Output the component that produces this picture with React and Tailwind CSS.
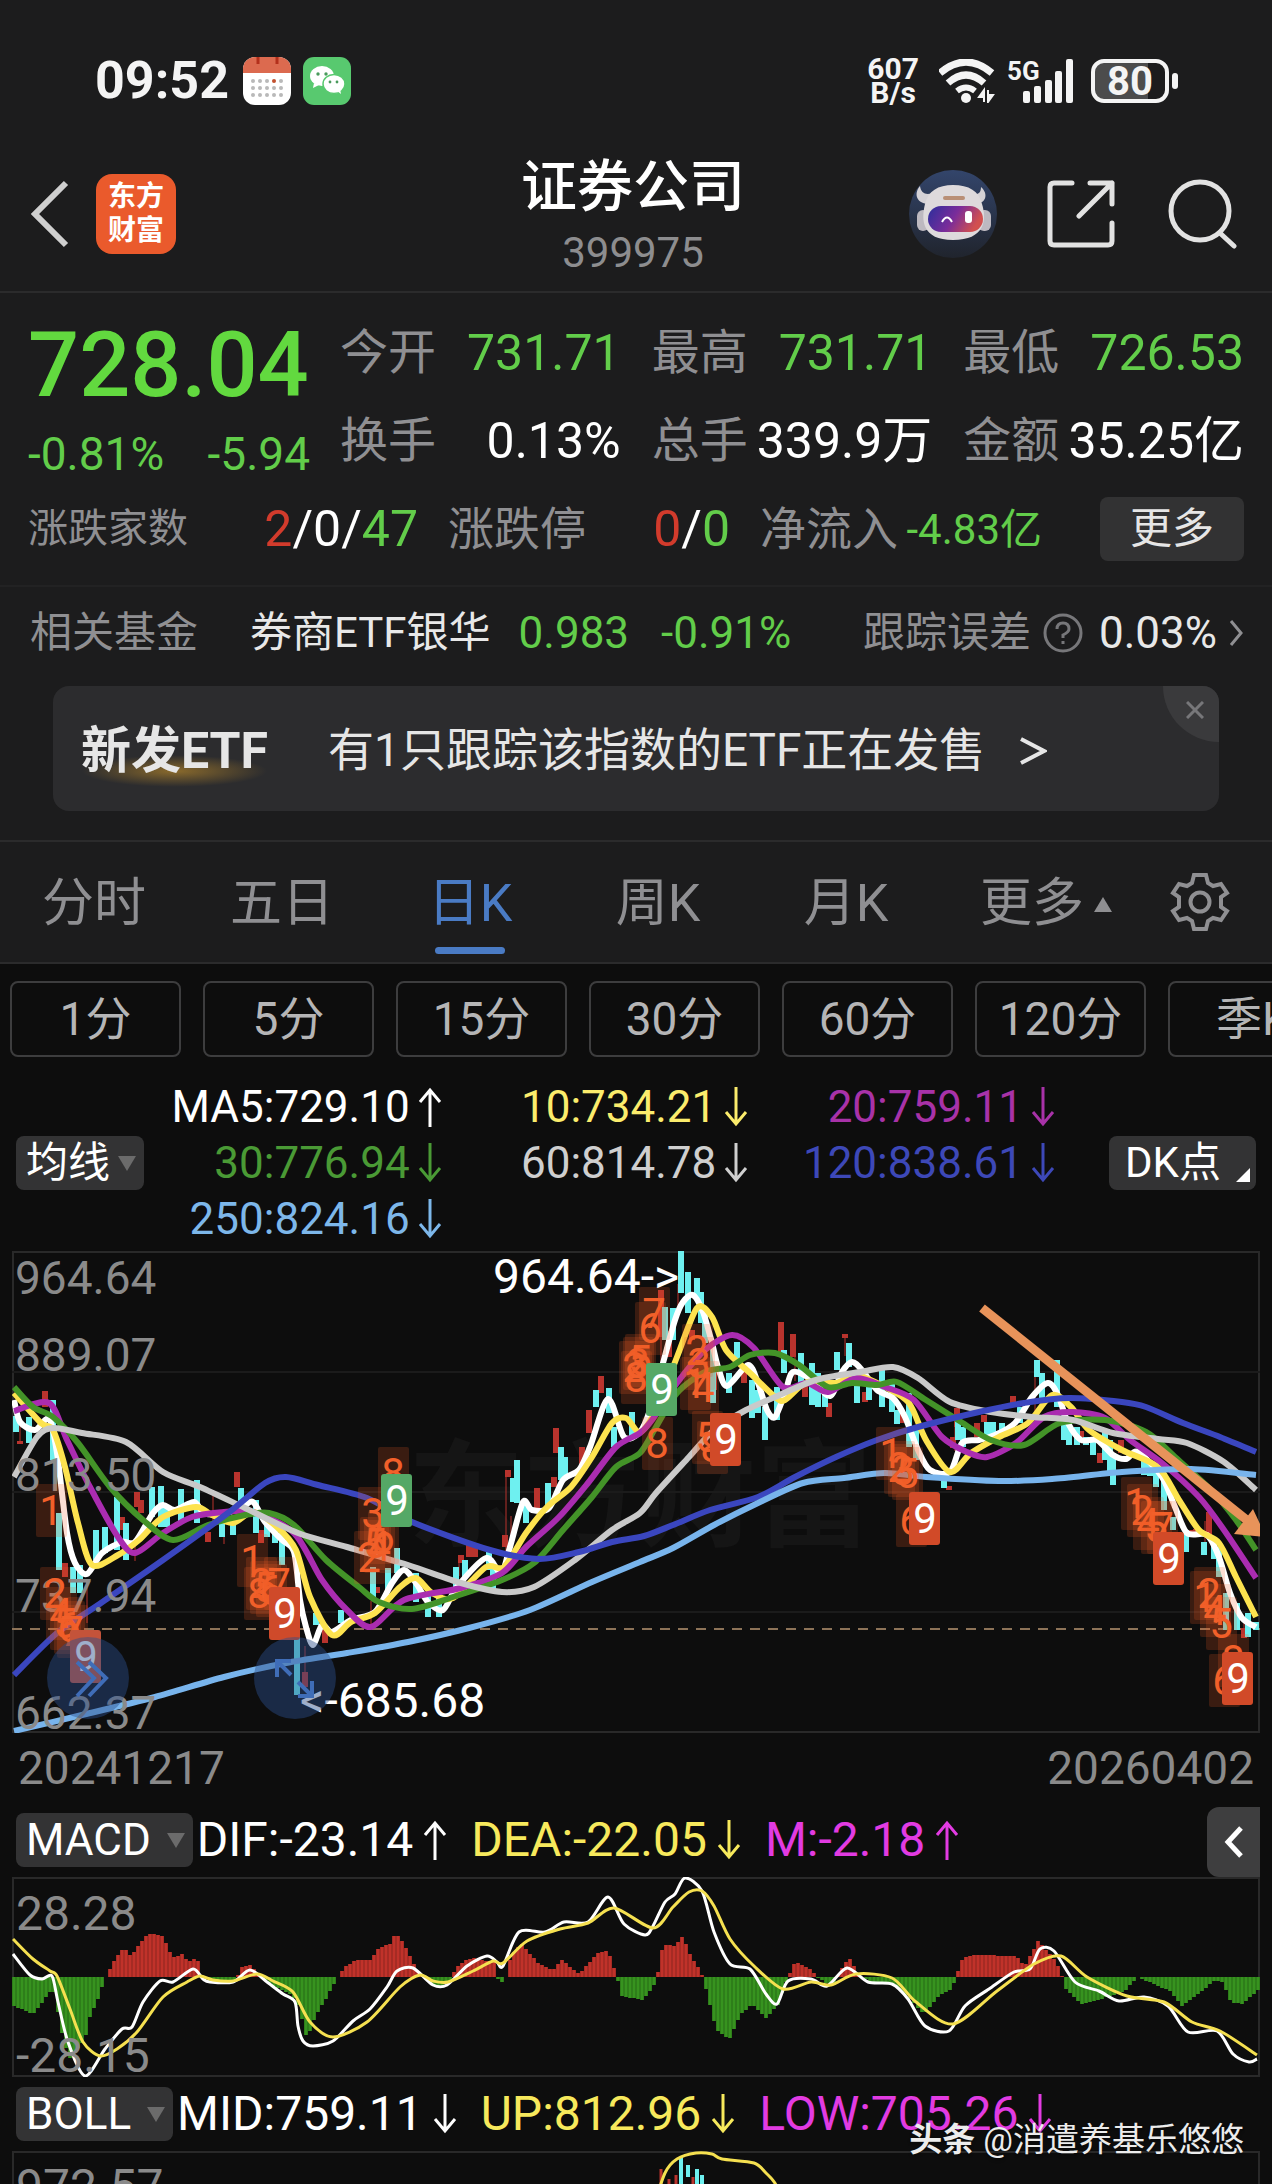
import React, { useState } from 'react';

const stats = [
    { label: '今开', value: '731.71', color: 'text-[#62cd4a]' },
    { label: '最高', value: '731.71', color: 'text-[#62cd4a]' },
    { label: '最低', value: '726.53', color: 'text-[#62cd4a]' },
    { label: '换手', value: '0.13%', color: 'text-white' },
    { label: '总手', value: '339.9万', color: 'text-white' },
    { label: '金额', value: '35.25亿', color: 'text-white' },
];

const tabs = ['分时', '五日', '日K', '周K', '月K'];
const periods = ['1分', '5分', '15分', '30分', '60分', '120分', '季K'];

const averages = [
    { text: 'MA5:729.10', up: true, color: 'text-white' },
    { text: '10:734.21', up: false, color: 'text-[#fbec6c]' },
    { text: '20:759.11', up: false, color: 'text-[#a832a8]' },
    { text: '30:776.94', up: false, color: 'text-[#4a9a35]' },
    { text: '60:814.78', up: false, color: 'text-[#cfcfcf]' },
    { text: '120:838.61', up: false, color: 'text-[#3d48b8]' },
    { text: '250:824.16', up: false, color: 'text-[#7db7ea]' },
];

// moving averages, "x,y" pairs in chart units (1248 x 482)
const maLines = [
    {
        color: '#ffffff',
        points: '2,149 8,171 23,179 37,168 45,202 55,282 63,312 75,323 90,302 110,291 123,291 141,262 151,254 163,259 182,251 192,262 210,263 229,257 241,251 253,271 270,289 282,301 288,349 294,376 301,394 310,374 320,381 339,369 363,361 380,332 392,319 404,332 416,351 431,359 445,336 474,307 489,322 498,296 511,251 520,259 537,257 551,229 567,219 578,196 596,148 612,186 628,181 638,159 651,112 663,69 671,51 681,44 691,61 700,92 706,116 715,135 736,114 746,132 755,159 763,166 773,142 781,121 800,129 818,145 830,121 840,111 850,119 865,139 881,147 893,166 906,199 918,219 938,221 950,192 967,189 983,184 1003,172 1020,146 1036,132 1046,144 1056,172 1069,189 1085,189 1101,204 1114,208 1126,201 1150,226 1163,256 1175,282 1195,284 1207,306 1218,342 1230,367 1244,376',
    },
    {
        color: '#fde34f',
        points: '2,142 29,172 41,179 53,216 66,272 80,314 106,304 127,289 151,266 184,256 200,264 221,272 241,261 265,276 284,299 298,346 320,384 339,371 363,362 388,336 404,327 420,342 441,347 474,316 492,316 514,282 535,256 559,236 580,206 600,172 614,167 628,181 644,159 665,106 685,57 700,66 714,99 738,122 763,146 773,149 795,131 824,132 844,124 873,136 897,152 914,189 938,221 959,202 987,186 1016,172 1040,144 1059,156 1077,179 1110,199 1146,216 1167,249 1187,279 1207,292 1224,326 1244,366',
    },
    {
        color: '#aa2cb0',
        points: '2,160 37,152 55,189 78,236 106,286 123,302 151,282 180,266 212,261 241,261 282,282 310,329 335,359 359,376 392,349 449,337 490,322 514,296 547,266 576,232 604,196 628,182 640,169 665,132 693,99 720,84 742,97 771,136 795,132 816,141 844,127 873,136 902,149 930,186 955,201 975,206 1004,192 1032,166 1061,161 1093,167 1118,189 1150,212 1187,246 1212,279 1244,327',
    },
    {
        color: '#439328',
        points: '2,136 21,156 41,166 66,192 98,236 131,269 161,289 196,274 233,264 257,262 282,274 314,309 347,336 367,351 400,358 441,346 490,329 522,312 551,279 580,246 604,216 628,202 644,176 665,142 693,121 718,116 738,104 763,102 787,114 816,136 840,132 865,134 885,131 914,149 946,169 979,189 1012,194 1048,172 1093,169 1134,181 1163,206 1199,239 1224,269 1244,299',
    },
    {
        color: '#c9c9c9',
        points: '2,226 25,186 41,177 70,182 114,191 151,221 188,236 233,257 286,282 335,296 396,314 449,332 490,341 522,336 563,309 600,279 628,262 644,242 677,206 702,179 734,159 763,146 804,129 848,121 881,116 906,127 938,151 979,161 1020,166 1061,169 1101,182 1146,188 1175,192 1212,211 1244,239',
    },
    {
        color: '#3a46bf',
        points: '2,424 45,382 86,354 151,309 216,262 253,232 274,226 306,234 355,247 400,271 478,299 527,308 567,301 600,291 632,285 661,274 698,259 746,246 783,226 824,206 865,189 906,176 967,161 1012,152 1057,147 1110,151 1134,156 1171,172 1208,186 1244,201',
    },
    {
        color: '#78b4ec',
        points: '2,480 70,464 143,446 212,426 274,412 335,402 396,391 457,377 518,359 580,331 628,311 661,297 702,274 746,252 791,232 832,227 873,222 914,226 987,230 1040,228 1110,221 1179,218 1244,224',
    },
];

// candle bodies, [x, top, bottom]
const fallingCandles = [
    [4, 165, 181], [17, 166, 192], [41, 149, 209], [47, 262, 319], [61, 316, 342], [68, 314, 342], [84, 279, 309], [93, 276, 302],
    [105, 246, 299], [114, 272, 309], [140, 236, 266], [149, 235, 276], [155, 256, 276], [169, 238, 272], [185, 229, 272],
    [210, 266, 286], [221, 269, 284], [229, 237, 262], [244, 249, 282], [255, 269, 286], [263, 274, 292], [270, 282, 314],
    [285, 386, 444], [304, 362, 374], [329, 359, 372], [361, 316, 349], [376, 317, 339], [385, 297, 322], [404, 322, 351],
    [416, 342, 366], [427, 346, 366], [444, 316, 339], [453, 309, 326], [477, 301, 319], [481, 316, 337], [501, 227, 251],
    [505, 209, 252], [514, 252, 272], [536, 232, 256], [549, 196, 229], [553, 206, 229], [584, 139, 156], [597, 137, 162],
    [602, 176, 196], [620, 161, 186], [653, 56, 89], [661, 57, 89], [669, 0, 42], [676, 21, 62], [685, 27, 49], [689, 41, 72],
    [693, 56, 92], [701, 89, 152], [717, 122, 142], [725, 91, 112], [740, 129, 167], [746, 139, 162], [753, 156, 189],
    [765, 136, 169], [772, 99, 122], [789, 102, 132], [800, 112, 154], [806, 122, 156], [813, 139, 156], [825, 101, 119],
    [837, 92, 116], [845, 132, 152], [857, 132, 149], [870, 119, 156], [880, 132, 161], [885, 159, 173], [897, 142, 196],
    [904, 176, 209], [932, 222, 237], [946, 169, 189], [951, 176, 196], [975, 171, 189], [981, 171, 186], [990, 172, 182],
    [1008, 156, 172], [1025, 109, 126], [1030, 122, 152], [1045, 109, 156], [1052, 162, 189], [1057, 172, 194],
    [1065, 176, 194], [1074, 186, 194], [1081, 189, 204], [1093, 181, 209], [1098, 189, 224], [1101, 202, 234],
    [1132, 209, 224], [1138, 212, 225], [1144, 212, 236], [1152, 222, 259], [1161, 266, 279], [1174, 279, 301],
    [1192, 291, 304], [1202, 292, 308], [1207, 296, 326], [1214, 342, 379], [1225, 352, 379], [1236, 362, 386], [1244, 371, 379],
];

const risingCandles = [
    [8, 190, 193], [33, 140, 156], [53, 312, 326], [110, 266, 279], [125, 241, 256], [129, 249, 262], [196, 281, 291],
    [225, 221, 236], [249, 279, 292], [293, 421, 436], [313, 379, 392], [365, 336, 342], [449, 304, 312], [457, 292, 306],
    [463, 296, 306], [493, 284, 296], [496, 219, 226], [525, 237, 259], [542, 226, 236], [544, 177, 202], [570, 196, 216],
    [577, 159, 182], [589, 125, 142], [649, 39, 86], [657, 80, 106], [680, 79, 89], [702, 112, 139], [732, 116, 132],
    [769, 71, 102], [781, 83, 106], [793, 132, 146], [797, 120, 132], [817, 152, 166], [833, 83, 87], [853, 141, 151],
    [889, 162, 172], [937, 235, 239], [941, 186, 197], [945, 157, 176], [965, 172, 186], [972, 164, 171], [1001, 145, 156],
    [1069, 180, 189], [1088, 202, 212], [1109, 189, 202], [1179, 279, 286], [1184, 278, 285], [1197, 261, 286], [1232, 377, 387],
];

const wicks = [
    [8, 168, 192], [75, 330, 372], [201, 245, 270], [212, 275, 293], [123, 290, 310], [293, 395, 440], [359, 350, 375],
    [447, 305, 325], [494, 226, 300], [499, 265, 300], [649, 86, 112], [666, 33, 60], [783, 106, 130], [833, 87, 105],
    [943, 160, 200], [1023, 126, 160], [1193, 270, 300], [1232, 365, 380],
];

// TD sequence counts, [x, y, digit]
const counts = [
    [39, 259, 1], [43, 342, 2], [49, 362, 4], [53, 372, 5], [57, 376, 6], [60, 380, 7],
    [240, 309, 1], [249, 332, 2], [253, 336, 5], [247, 342, 8], [259, 339, 6], [267, 332, 7],
    [361, 262, 3], [371, 286, 6], [363, 292, 5], [357, 306, 2], [367, 295, 4], [381, 222, 8],
    [626, 112, 3], [628, 109, 5], [622, 116, 2], [624, 126, 8], [642, 62, 7], [638, 77, 6], [645, 192, 8],
    [685, 99, 2], [687, 112, 3], [683, 132, 1], [691, 136, 4], [695, 186, 5], [700, 196, 8],
    [879, 202, 1], [887, 216, 2], [891, 219, 3], [895, 222, 5], [899, 269, 6],
    [1124, 252, 1], [1130, 259, 2], [1136, 272, 4], [1144, 276, 5], [1150, 276, 7],
    [1193, 346, 1], [1197, 342, 2], [1203, 359, 4], [1209, 372, 5], [1221, 409, 8], [1212, 429, 6],
];

const badges = [
    [58, 379, '#c4533a'],
    [257, 336, '#cf4a2a'],
    [369, 223, '#55a866'],
    [634, 112, '#55a866'],
    [698, 162, '#d14a28'],
    [897, 241, '#d14a28'],
    [1141, 281, '#d14a28'],
    [1210, 401, '#d14a28'],
];

// MACD histogram shape, [x, value]
const histogram = [
    [0, -29], [19, -37], [37, -14], [41, -15], [46, -48], [55, -82], [71, -62], [76, -40], [83, -25], [91, -1], [93, 2], [101, 18],
    [110, 29], [117, 21], [125, 33], [131, 40], [138, 44], [150, 40], [155, 26], [161, 19], [168, 23], [175, 15], [183, 20],
    [188, 1], [198, -7], [208, -3], [218, -6], [223, -1], [226, 9], [236, 12], [245, 3], [250, -2], [265, -12], [278, -18],
    [285, -30], [293, -62], [301, -40], [313, -20], [323, -1], [331, 10], [341, 17], [356, 17], [365, 29], [376, 33], [381, 43],
    [386, 40], [393, 27], [405, 3], [421, -10], [438, -4], [441, 9], [450, 16], [458, 19], [480, 15], [482, 0], [487, -6],
    [492, 0], [497, 21], [507, 34], [523, 15], [539, 7], [548, 17], [565, 3], [584, 24], [594, 27], [602, 3], [608, -19],
    [629, -23], [641, -7], [643, 0], [649, 33], [661, 31], [669, 41], [677, 21], [687, 5], [692, -12], [702, -52], [715, -63],
    [726, -38], [738, -27], [752, -41], [764, -28], [773, -2], [781, 15], [797, 8], [803, 0], [819, -10], [825, 5], [835, 20],
    [844, 3], [856, -5], [880, -7], [896, -22], [910, -37], [925, -19], [938, -12], [942, 0], [949, 20], [961, 22], [1002, 21],
    [1011, 11], [1024, 36], [1038, 21], [1046, 8], [1052, -12], [1067, -27], [1087, -22], [1111, -14], [1123, 0], [1140, -7],
    [1156, -14], [1168, -29], [1184, -17], [1200, -4], [1209, -5], [1217, -25], [1229, -27], [1248, -9],
];

const difPoints =
    '1,77 18,98 30,102 40,99 46,125 56,165 73,199 93,172 110,152 120,150 131,125 148,104 161,105 181,92 191,102 198,105 221,105 238,93 255,105 271,117 283,125 286,149 291,164 301,169 321,164 341,144 358,132 375,110 385,94 401,91 421,108 435,108 455,89 475,79 485,85 491,89 507,55 533,55 552,45 576,45 596,20 612,47 633,58 641,49 653,25 663,17 673,1 690,14 702,55 718,87 738,92 754,117 765,127 776,104 799,102 815,109 835,91 856,105 880,107 896,122 913,149 937,154 953,129 977,112 1002,95 1018,92 1028,72 1042,74 1063,105 1087,114 1107,124 1132,120 1156,129 1176,155 1205,154 1221,177 1237,185 1245,182';
const deaPoints =
    '1,62 21,82 38,94 45,99 58,132 71,165 88,179 105,172 125,155 151,120 175,105 188,99 201,103 221,104 245,97 261,104 281,115 298,145 321,160 355,145 388,110 408,98 421,104 436,105 461,94 481,84 491,86 515,64 548,52 576,46 602,31 641,51 661,30 677,15 690,14 702,29 718,62 742,89 771,112 799,105 819,108 844,97 880,101 904,125 941,147 985,114 1022,87 1049,79 1075,100 1115,119 1152,125 1180,145 1208,154 1245,178';

// smooth path through the points
const toPath = (str) => {
    const p = str.split(' ').map((s) => s.split(',').map(Number));
    let d = `M${p[0][0]} ${p[0][1]}`;
    for (let i = 0; i < p.length - 1; i++) {
        const a = p[i - 1] || p[i];
        const b = p[i];
        const c = p[i + 1];
        const e = p[i + 2] || c;
        d += ` C${b[0] + (c[0] - a[0]) / 7} ${b[1] + (c[1] - a[1]) / 7} ${c[0] - (e[0] - b[0]) / 7} ${c[1] - (e[1] - b[1]) / 7} ${c[0]} ${c[1]}`;
    }
    return d;
};

const barPath = (positive) => {
    let d = '';
    for (let x = 0; x < 1246; x += 4) {
        const i = Math.max(1, histogram.findIndex((h) => h[0] > x));
        const [x0, v0] = histogram[i - 1];
        const [x1, v1] = histogram[i];
        const v = v0 + ((v1 - v0) * (x - x0)) / (x1 - x0);
        if (v > 0 === positive) d += `M${x + 2} 100V${Math.round(100 - v)}`;
    }
    return d;
};

const TrendArrow = ({ up }) => (
    <svg className="h-10 w-6 shrink-0" viewBox="0 0 24 40" fill="none" stroke="currentColor" strokeWidth="3">
        <path d={up ? 'M12 40V3M2 15L12 3L22 15' : 'M12 0V37M2 25L12 37L22 25'} />
    </svg>
);

const Chip = ({ children }) => (
    <button className="flex h-[54px] shrink-0 items-center rounded-lg bg-[#333334] pr-2 pl-2.5 text-[42px] leading-[54px] text-white">
        {children}
        <svg className="ml-2 h-4 w-[18px]" viewBox="0 0 18 16">
            <path d="M0 1H18L9 16Z" fill="#6b6b6b" />
        </svg>
    </button>
);

const StatusBar = () => (
    <div className="flex items-center justify-between pt-14 pr-[93px] pb-8 pl-[95px] text-[#f4f4f4]">
        <div className="flex h-[49px] items-center">
            <span className="text-[52px] leading-[52px] font-bold">09:52</span>
            <svg className="ml-3.5 h-12 w-12" viewBox="0 0 48 48">
                <rect width="48" height="48" rx="12" fill="#fff" />
                <path d="M0 16V12A12 12 0 0 1 12 0H36A12 12 0 0 1 48 12V16Z" fill="#dc6a4f" />
                <path d="M15 0V7M34 0V7" stroke="#b3301c" strokeWidth="3" />
                {[24, 31, 38].map((y) => [10, 17, 24, 31, 38].map((x) => (
                    <circle key={`${x}-${y}`} cx={x} cy={y} r="2" fill={x === 31 && y === 24 ? '#c2512f' : '#b9b9b9'} />
                )))}
            </svg>
            <svg className="ml-3 h-12 w-12" viewBox="0 0 48 48">
                <rect width="48" height="48" rx="11" fill="#58c96f" />
                <path d="M11 26L10 31L16 28Z" fill="#fff" />
                <ellipse cx="19" cy="19" rx="12" ry="10" fill="#fff" />
                <ellipse cx="31" cy="27" rx="11" ry="9.5" fill="#fff" stroke="#58c96f" strokeWidth="1.5" />
                <path d="M34 34L38 37L37 32Z" fill="#fff" />
                <circle cx="15" cy="17" r="1.7" fill="#4a9a5c" />
                <circle cx="23" cy="17" r="1.7" fill="#4a9a5c" />
                <circle cx="27" cy="25" r="1.4" fill="#4a9a5c" />
                <circle cx="34" cy="25" r="1.4" fill="#4a9a5c" />
            </svg>
        </div>
        <div className="flex h-[49px] items-center">
            <div className="text-center text-[30px] leading-6 font-bold">
                <div>607</div>
                <div>B/s</div>
            </div>
            <svg className="ml-5 h-11 w-14" viewBox="0 0 56 44" fill="none" stroke="currentColor" strokeWidth="7">
                <path d="M1 14Q27 -8 53 14" />
                <path d="M9 24Q27 8 45 24" />
                <path d="M18 32Q27 25 36 32" strokeWidth="6" />
                <circle cx="27" cy="39" r="5" fill="currentColor" stroke="none" />
                <path d="M45 43V31L40 38H45M49 31V43L54 36H49" strokeWidth="2" fill="currentColor" />
            </svg>
            <svg className="ml-3 h-12 w-[68px]" viewBox="0 0 68 48" fill="currentColor">
                <text x="0" y="23" fontSize="26" fontWeight="700">5G</text>
                <rect x="16" y="34" width="7" height="12" rx="2" />
                <rect x="27" y="29" width="7" height="17" rx="2" />
                <rect x="38" y="23" width="7" height="23" rx="2" />
                <rect x="48" y="14" width="7" height="32" rx="2" />
                <rect x="59" y="2" width="7" height="44" rx="2" />
            </svg>
            <svg className="ml-4 h-11 w-[88px]" viewBox="0 0 88 44">
                <path d="M12 2H57V42H12A10 10 0 0 1 2 32V12A10 10 0 0 1 12 2Z" fill="#4c4c4c" />
                <rect x="2" y="2" width="74" height="40" rx="11" fill="none" stroke="currentColor" strokeWidth="4" />
                <rect x="81" y="14" width="6" height="16" rx="3" fill="currentColor" />
                <text x="39" y="36" fontSize="40" fontWeight="700" fill="currentColor" textAnchor="middle">80</text>
            </svg>
        </div>
    </div>
);

const Header = () => (
    <header className="grid h-[156px] grid-cols-3 items-center border-b-2 border-[#2b2b2c] pr-[34px] pl-7">
        <div className="flex items-center">
            <button aria-label="返回">
                <svg className="h-[68px] w-11" viewBox="0 0 44 68" fill="none" stroke="#cfcfcf" strokeWidth="6">
                    <path d="M38 3L7 34L38 65" />
                </svg>
            </button>
            <div className="ml-6 flex h-20 w-20 flex-col items-center justify-center rounded-2xl bg-[#ea5a2c] text-[28px] leading-[34px] font-bold text-white">
                <span>东方</span>
                <span>财富</span>
            </div>
        </div>
        <div className="pt-1.5 text-center">
            <h1 className="text-[56px] leading-[72px] font-medium text-white">证券公司</h1>
            <p className="text-[42px] leading-[60px] text-[#8d8d8f]">399975</p>
        </div>
        <div className="flex items-center justify-end">
            <button aria-label="智能助手">
                <svg className="h-[88px] w-[88px]" viewBox="0 0 88 88">
                    <defs>
                        <linearGradient id="disc" x1="0" y1="0" x2="0" y2="1">
                            <stop offset="0" stopColor="#33456b" />
                            <stop offset="1" stopColor="#20242d" />
                        </linearGradient>
                        <linearGradient id="visor" x1="0" y1="0" x2="1" y2="0.3">
                            <stop offset="0" stopColor="#2b2f9c" />
                            <stop offset="0.55" stopColor="#7a2c9a" />
                            <stop offset="1" stopColor="#d2504f" />
                        </linearGradient>
                    </defs>
                    <circle cx="44" cy="44" r="44" fill="url(#disc)" />
                    <path d="M11 16C4 24 8 34 20 34L26 22C18 26 12 24 11 16Z" fill="#d5d2d6" />
                    <path d="M72 17C80 24 77 34 66 34L60 22C68 26 72 24 72 17Z" fill="#d5d2d6" />
                    <rect x="8" y="40" width="12" height="21" rx="6" fill="#bdb9c0" />
                    <rect x="69" y="40" width="13" height="21" rx="6" fill="#bdb9c0" />
                    <path d="M44 15C60 15 70 21 73 34C78 50 76 70 44 70C13 70 12 50 16 34C19 21 29 15 44 15Z" fill="#dedadc" />
                    <rect x="34" y="26" width="22" height="4" rx="2" fill="#b98f76" />
                    <rect x="19" y="36" width="55" height="26" rx="13" fill="url(#visor)" />
                    <path d="M33 52Q38 43 43 52" fill="none" stroke="#fff" strokeWidth="2" />
                    <rect x="56" y="41" width="7" height="12" rx="3" fill="#fff" />
                </svg>
            </button>
            <button aria-label="分享" className="ml-[50px]">
                <svg className="h-[68px] w-[68px]" viewBox="0 0 68 68" fill="none" stroke="#e2e2e2" strokeWidth="5" strokeLinecap="round" strokeLinejoin="round">
                    <path d="M25 3H7Q3 3 3 7V61Q3 65 7 65H61Q65 65 65 61V43" />
                    <path d="M43 3H65V24M65 3L32 36" />
                </svg>
            </button>
            <button aria-label="搜索" className="ml-[53px]">
                <svg className="h-[70px] w-[70px]" viewBox="0 0 70 70" fill="none" stroke="#e2e2e2" strokeWidth="5" strokeLinecap="round">
                    <circle cx="32" cy="32" r="29" />
                    <path d="M53 55L66 67" />
                </svg>
            </button>
        </div>
    </header>
);

const Quote = () => (
    <section className="border-b-2 border-[#222223] px-7 pt-4 pb-3">
        <div className="flex gap-[30px]">
            <div className="w-[282px] shrink-0">
                <div className="text-[90px] leading-[114px] font-medium text-[#62d93f]">728.04</div>
                <div className="flex justify-between text-[46px] leading-[62px] text-[#62cd4a]">
                    <span>-0.81%</span>
                    <span>-5.94</span>
                </div>
            </div>
            <dl className="grid flex-1 grid-cols-3 gap-x-[31px]">
                {stats.map((s) => (
                    <div key={s.label} className="flex h-[88px] items-center justify-between leading-[88px] whitespace-nowrap">
                        <dt className="text-5xl leading-[88px] text-[#8f8f92]">{s.label}</dt>
                        <dd className={`text-[50px] ${s.color}`}>{s.value}</dd>
                    </div>
                ))}
            </dl>
        </div>
        <div className="flex h-[88px] items-center gap-[30px] whitespace-nowrap">
            <div className="flex w-[390px] items-center justify-between text-[50px] text-white">
                <span className="text-[40px] text-[#8f8f92]">涨跌家数</span>
                <span><span className="text-[#d23b2c]">2</span>/0/<span className="text-[#62cd4a]">47</span></span>
            </div>
            <div className="flex w-[282px] items-center justify-between text-[50px] text-white">
                <span className="text-[46px] text-[#8f8f92]">涨跌停</span>
                <span><span className="text-[#d23b2c]">0</span>/<span className="text-[#62cd4a]">0</span></span>
            </div>
            <div className="flex w-[282px] items-center justify-between">
                <span className="text-[46px] text-[#8f8f92]">净流入</span>
                <span className="text-[42px] text-[#62cd4a]">-4.83亿</span>
            </div>
            <button className="ml-auto h-16 w-36 rounded-lg bg-[#323233] text-[42px] leading-[62px] text-[#e6e6e6]">更多</button>
        </div>
    </section>
);

const Funds = () => (
    <section className="border-b-2 border-[#2b2b2c] pb-[29px]">
        <a href="#fund" className="flex h-[99px] items-center pr-[29px] pb-2 pl-[30px] text-[42px] whitespace-nowrap text-[#e8e8e8]">
            <span className="text-[#8f8f92]">相关基金</span>
            <span className="ml-[52px]">券商ETF银华</span>
            <span className="ml-7 text-[44px] text-[#62cd4a]">0.983</span>
            <span className="ml-8 text-[44px] text-[#62cd4a]">-0.91%</span>
            <span className="ml-auto text-[#8f8f92]">跟踪误差</span>
            <svg className="ml-3 h-10 w-10" viewBox="0 0 40 40" fill="none" stroke="#77777a" strokeWidth="3">
                <circle cx="20" cy="20" r="18" />
                <path d="M14 16Q14 10 20 10T26 16Q26 19 20 22V25M20 28V31" />
            </svg>
            <span className="ml-4 text-[44px]">0.03%</span>
            <svg className="ml-3 h-7 w-3.5" viewBox="0 0 14 28" fill="none" stroke="#8f8f92" strokeWidth="3">
                <path d="M2 2L12 14L2 26" />
            </svg>
        </a>
        <div className="relative mx-[53px] flex h-[125px] items-center overflow-hidden rounded-2xl bg-[#2c2c2e] pt-1 pl-7 whitespace-nowrap text-[#e6e6e6]">
            <div className="relative">
                <div className="absolute inset-x-0 -bottom-1 h-8 bg-radial from-[#8a6a2c] to-transparent to-70%" />
                <span className="relative text-[50px] leading-[64px] font-bold">新发ETF</span>
            </div>
            <span className="ml-[60px] text-[46px]">有1只跟踪该指数的ETF正在发售</span>
            <svg className="ml-[34px] h-7 w-7" viewBox="0 0 28 28" fill="none" stroke="currentColor" strokeWidth="4">
                <path d="M2 2L25 14L2 26" />
            </svg>
            <button aria-label="关闭" className="absolute top-0 right-0 flex h-14 w-14 items-center justify-center rounded-bl-[56px] bg-[#3a3a3c]">
                <svg className="mb-2 ml-2 h-[18px] w-[18px]" viewBox="0 0 18 18" stroke="#77777a" strokeWidth="3">
                    <path d="M1 1L17 17M17 1L1 17" />
                </svg>
            </button>
        </div>
    </section>
);

const Tabs = () => {
    const [active, setActive] = useState('日K');

    return (
        <nav className="flex h-[122px] border-b-2 border-[#2b2b2c] pr-6 text-[52px] text-[#8f8f92]">
            {tabs.map((t) => (
                <button
                    key={t}
                    onClick={() => setActive(t)}
                    className={`relative flex-[188] pt-1 leading-[116px] ${t === active ? 'text-[#4a7bc4]' : ''}`}
                >
                    {t}
                    {t === active && <span className="absolute bottom-2 left-1/2 h-[7px] w-[70px] -translate-x-1/2 rounded-full bg-[#4a7bc4]" />}
                </button>
            ))}
            <button className="flex flex-[212] items-center justify-center gap-2.5 pt-1 leading-[116px]">
                更多
                <svg className="h-4 w-[18px]" viewBox="0 0 18 16">
                    <path d="M0 16H18L9 1Z" fill="currentColor" />
                </svg>
            </button>
            <button aria-label="设置" className="flex flex-[96] items-center justify-center">
                <svg className="h-[60px] w-[60px]" viewBox="-30 -30 60 60" fill="none" stroke="currentColor" strokeWidth="4">
                    <path d="M-6 -27H6L8 -19L13 -16L21 -18L27 -9L21 -5V5L27 9L21 18L13 16L8 19L6 27H-6L-8 19L-13 16L-21 18L-27 9L-21 5V-5L-27 -9L-21 -18L-13 -16L-8 -19Z" />
                    <circle r="9.5" />
                </svg>
            </button>
        </nav>
    );
};

const AverageLegend = () => (
    <div className="mt-[22px] flex items-center px-4 text-[44px]">
        <Chip>均线</Chip>
        <ul className="grid flex-1 grid-cols-[297fr_306fr_306fr] whitespace-nowrap">
            {averages.map((a) => (
                <li key={a.text} className={`flex h-14 items-center justify-end gap-2 leading-[56px] ${a.color}`}>
                    {a.text}
                    <TrendArrow up={a.up} />
                </li>
            ))}
        </ul>
        <button className="relative ml-[54px] h-[54px] w-[147px] rounded-lg bg-[#333334] pl-4 text-left text-[42px] leading-[54px] text-white">
            DK点
            <svg className="absolute right-1.5 bottom-2 h-3.5 w-3.5" viewBox="0 0 14 14">
                <path d="M14 0V14H0Z" fill="#fff" />
            </svg>
        </button>
    </div>
);

const PriceChart = () => (
    <svg className="block w-full" viewBox="0 0 1248 482" fontSize="46">
        <text x="628" y="286" fontSize="116" fontWeight="700" textAnchor="middle" fill="#151515">东方财富</text>
        <rect x="1" y="1" width="1246" height="480" fill="none" stroke="#292929" strokeWidth="2" />
        <path d="M0 121H1248M0 241H1248M0 361H1248" stroke="#1b1b1b" strokeWidth="2" />
        <path d="M0 378H1248" stroke="#8d7358" strokeWidth="2" strokeDasharray="10 8" />
        <path d={wicks.map(([x, a, b]) => `M${x} ${a}V${b}`).join('')} stroke="#b8332d" strokeWidth="1" />
        <path d={risingCandles.map(([x, a, b]) => `M${x} ${a}V${b}`).join('')} stroke="#b8332d" strokeWidth="6" />
        <path d={fallingCandles.map(([x, a, b]) => `M${x} ${a}V${b}`).join('')} stroke="#6ef0f0" strokeWidth="6" />
        {maLines.map((l) => (
            <path key={l.color} d={toPath(l.points)} fill="none" stroke={l.color} strokeWidth="6" strokeLinejoin="round" />
        ))}
        <g fill="#8a8a8a">
            <text x="3" y="43">964.64</text>
            <text x="3" y="120">889.07</text>
            <text x="3" y="240">813.50</text>
            <text x="3" y="361">737.94</text>
            <text x="3" y="478">662.37</text>
        </g>
        <g textAnchor="middle" fontSize="42">
            {counts.map(([x, y, n]) => (
                <g key={`${x}-${y}`}>
                    <rect x={x - 15} y={y - 26} width="31" height="53" rx="2" fill="#f05a22" opacity="0.2" />
                    <text x={x} y={y + 15} fill="#f2602a">{n}</text>
                </g>
            ))}
            {badges.map(([x, y, fill]) => (
                <g key={x}>
                    <rect x={x} y={y} width="31" height="53" rx="3" fill={fill} />
                    <text x={x + 16} y={y + 41} fill="#fff">9</text>
                </g>
            ))}
        </g>
        <g fill="#fff" fontSize="48">
            <text x="667" y="42" textAnchor="end">964.64-&gt;</text>
            <text x="288" y="466">&lt;-685.68</text>
        </g>
        <g fill="#2b4d8c" fillOpacity="0.45" stroke="#3f6db8" strokeWidth="4">
            <circle cx="76" cy="427" r="41" stroke="none" />
            <circle cx="283" cy="427" r="41" stroke="none" />
            <path d="M65 411L82 427L65 445M77 411L94 427L77 445" fill="none" />
            <path d="M265 426V410H279M265 410L279 424M300 430V445H286M300 445L286 431" fill="none" />
        </g>
        <path d="M970 57L1236 270" stroke="#e8935a" strokeWidth="9" />
        <path d="M1241 258L1254 286L1222 283Z" fill="#e8935a" />
    </svg>
);

const MacdChart = () => (
    <svg className="block w-full" viewBox="0 0 1248 200" fontSize="48">
        <rect x="1" y="1" width="1246" height="198" fill="none" stroke="#292929" strokeWidth="2" />
        <path d={barPath(true)} stroke="#8a241e" strokeWidth="4" />
        <path d={barPath(true)} stroke="#c0322a" strokeWidth="3" />
        <path d={barPath(false)} stroke="#276b16" strokeWidth="4" />
        <path d={barPath(false)} stroke="#37931f" strokeWidth="3" />
        <path d={toPath(difPoints)} fill="none" stroke="#fff" strokeWidth="3" />
        <path d={toPath(deaPoints)} fill="none" stroke="#f5e050" strokeWidth="3" />
        <g fill="#8a8a8a">
            <text x="4" y="53">28.28</text>
            <text x="4" y="195">-28.15</text>
        </g>
    </svg>
);

const BollChart = () => (
    <svg className="block w-full" viewBox="0 0 1248 200" fontSize="48">
        <rect x="1" y="1" width="1246" height="198" fill="none" stroke="#292929" strokeWidth="2" />
        <path d="M649 18V60M657 28V60M664 24V60M681 26V60" stroke="#b8332d" strokeWidth="3" />
        <path d="M669 6V60M676 14V26M685 18V60M690 24V60" stroke="#6ef0f0" strokeWidth="4" />
        <path d={toPath('640,60 653,22 665,8 684,2 700,3 710,8 742,12 754,22 764,34 772,60')} fill="none" stroke="#f5e050" strokeWidth="3" />
        <text x="4" y="52" fill="#8a8a8a">972.57</text>
    </svg>
);

const IndicatorRow = ({ name, values }) => (
    <div className="flex h-[74px] items-center text-5xl whitespace-nowrap">
        <div className="mr-1 ml-1">
            <Chip><span className="mr-2 text-[44px]">{name}</span></Chip>
        </div>
        {values.map((v) => (
            <span key={v.text} className={`mr-6 flex items-center gap-2.5 ${v.color}`}>
                {v.text}
                <TrendArrow up={v.up} />
            </span>
        ))}
    </div>
);

const App = () => (
    <div className="relative flex h-screen flex-col overflow-hidden bg-[#0d0d0d] font-['Roboto','Noto_Sans_CJK_SC',sans-serif]">
        <div className="bg-[#1c1c1d]">
            <StatusBar />
            <Header />
            <Quote />
            <Funds />
            <Tabs />
        </div>

        <div className="mt-[17px] flex shrink-0 gap-[22px] overflow-hidden pl-2.5">
            {periods.map((p) => (
                <button key={p} className="h-[76px] w-[171px] shrink-0 rounded-lg border-2 border-[#3d3d3e] text-[46px] leading-[72px] text-[#b5b5b6]">
                    {p}
                </button>
            ))}
        </div>
        <AverageLegend />

        <main className="mx-3 mt-1">
            <PriceChart />
            <div className="flex h-[70px] items-center justify-between px-1.5 text-[46px] text-[#8a8a8a]">
                <span>20241217</span>
                <span>20260402</span>
            </div>
            <div className="flex items-end justify-between">
                <IndicatorRow
                    name="MACD"
                    values={[
                        { text: 'DIF:-23.14', up: true, color: 'text-white' },
                        { text: 'DEA:-22.05', up: false, color: 'text-[#f7e95c]' },
                        { text: 'M:-2.18', up: true, color: 'text-[#e23be2]' },
                    ]}
                />
                <button aria-label="展开" className="flex h-[70px] w-[53px] items-center justify-center rounded-l-xl bg-[#3e3e3f]">
                    <svg className="h-8 w-5" viewBox="0 0 20 32" fill="none" stroke="#fff" strokeWidth="5">
                        <path d="M17 2L4 16L17 30" />
                    </svg>
                </button>
            </div>
            <MacdChart />
            <IndicatorRow
                name="BOLL"
                values={[
                    { text: 'MID:759.11', up: false, color: 'text-white' },
                    { text: 'UP:812.96', up: false, color: 'text-[#f7e95c]' },
                    { text: 'LOW:705.26', up: false, color: 'text-[#e23be2]' },
                ]}
            />
            <BollChart />
        </main>

        <div className="absolute right-7 bottom-5 flex items-center gap-2 text-[33px] leading-[48px] whitespace-nowrap text-[#ececec] text-shadow-md">
            <span className="font-bold">头条</span>
            <span>@消遣养基乐悠悠</span>
        </div>
    </div>
);

export default App;
